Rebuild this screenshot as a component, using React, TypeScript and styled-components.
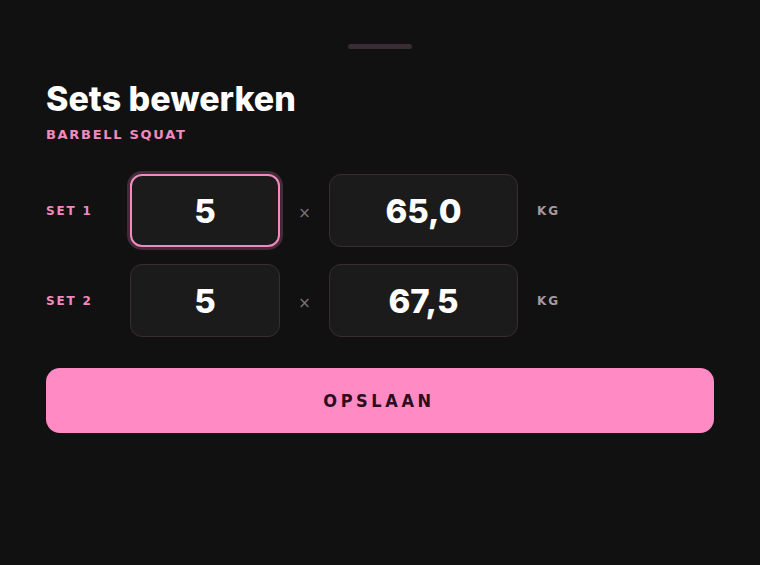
import styled, { createGlobalStyle } from 'styled-components'

const GlobalStyle = createGlobalStyle`
  html, body {
    margin: 0;
    padding: 0;
    background: #121112;
  }
  * { box-sizing: border-box; }
`

const Sheet = styled.div`
  width: 760px;
  height: 565px;
  background: #121112;
  padding: 44px 46px 0;
  display: flex;
  flex-direction: column;
`

const Handle = styled.div`
  align-self: center;
  width: 64px;
  height: 5px;
  border-radius: 3px;
  background: #3a2c33;
`

const Title = styled.h1`
  margin: 30px 0 0;
  font-family: Inter, "Noto Sans", sans-serif;
  font-weight: 800;
  font-size: 34px;
  line-height: 40px;
  letter-spacing: 0;
  color: #ffffff;
`

const Subtitle = styled.div`
  margin-top: 8px;
  font-family: "DejaVu Sans", sans-serif;
  font-weight: 700;
  font-size: 13px;
  letter-spacing: 1.7px;
  color: #f08ac0;
`

const Rows = styled.div`
  margin-top: 32px;
  display: flex;
  flex-direction: column;
  gap: 17px;
`

const Row = styled.div`
  display: flex;
  align-items: center;
  height: 73px;
`

const SetLabel = styled.div`
  width: 84px;
  font-family: "DejaVu Sans", sans-serif;
  font-weight: 700;
  font-size: 12px;
  letter-spacing: 1.8px;
  color: #f08ac0;
`

const Field = styled.div<{ $w: number; $focused?: boolean }>`
  width: ${p => p.$w}px;
  height: 73px;
  border-radius: 12px;
  background: #1c1b1c;
  border: ${p => (p.$focused ? '2px solid #f08ac0' : '1px solid #3b2b33')};
  box-shadow: ${p => (p.$focused ? '0 0 0 3px rgba(240, 138, 192, 0.22)' : 'none')};
  display: flex;
  align-items: center;
  justify-content: center;
  font-family: Inter, "Noto Sans", sans-serif;
  font-weight: 800;
  font-size: 33px;
  color: #ffffff;
`

const Times = styled.div`
  width: 49px;
  text-align: center;
  font-family: "DejaVu Sans", sans-serif;
  font-size: 15px;
  color: #7a7478;
  padding-top: 4px;
`

const Unit = styled.div`
  margin-left: 19px;
  font-family: "DejaVu Sans", sans-serif;
  font-weight: 700;
  font-size: 12px;
  letter-spacing: 2px;
  color: #a49aa0;
`

const SaveButton = styled.button`
  margin-top: 31px;
  height: 65px;
  width: 100%;
  border: none;
  border-radius: 14px;
  background: #ff8ac4;
  color: #2a0d1e;
  font-family: "DejaVu Sans Condensed", "DejaVu Sans", sans-serif;
  font-stretch: condensed;
  font-weight: 700;
  font-size: 18px;
  letter-spacing: 3.6px;
  padding-left: 4px;
  cursor: pointer;
`

const sets = [
  { reps: '5', weight: '65,0', focused: true },
  { reps: '5', weight: '67,5', focused: false },
]

export default function App() {
  return (
    <>
      <GlobalStyle />
      <Sheet>
        <Handle />
        <Title>Sets bewerken</Title>
        <Subtitle>BARBELL SQUAT</Subtitle>
        <Rows>
          {sets.map((s, i) => (
            <Row key={i}>
              <SetLabel>SET {i + 1}</SetLabel>
              <Field $w={150} $focused={s.focused}>{s.reps}</Field>
              <Times>×</Times>
              <Field $w={189}>{s.weight}</Field>
              <Unit>KG</Unit>
            </Row>
          ))}
        </Rows>
        <SaveButton>OPSLAAN</SaveButton>
      </Sheet>
    </>
  )
}
